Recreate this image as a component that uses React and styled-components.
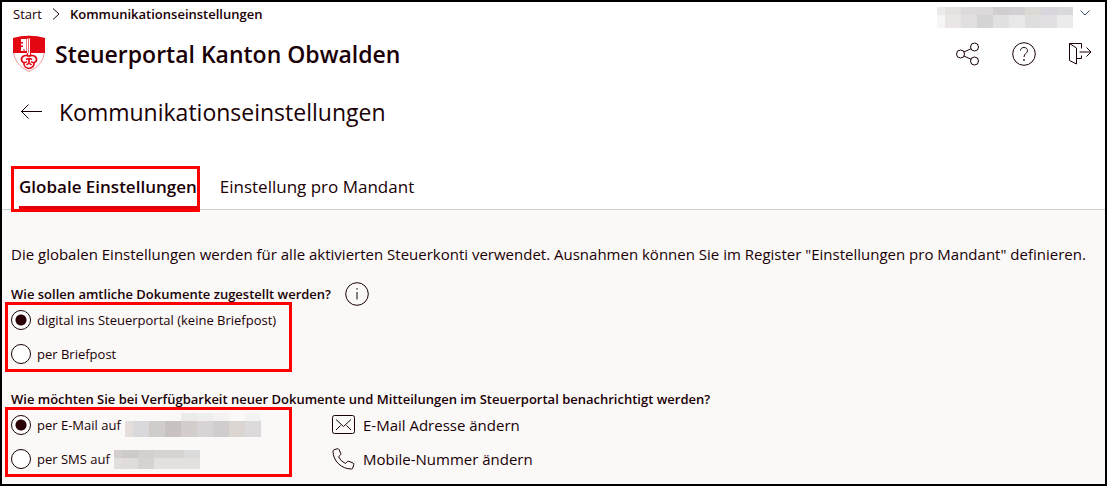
import React from 'react';
import styled, { createGlobalStyle } from 'styled-components';

const accountTiles = [
    [0, 0, 8, 8, '#ebebeb'], [8, 0, 16, 8, '#e3e2e1'], [24, 0, 16, 8, '#dedadc'], [40, 0, 16, 8, '#dcd9da'],
    [56, 0, 16, 8, '#d2cecf'], [72, 0, 16, 8, '#d2d0d2'], [88, 0, 16, 8, '#ddd9d5'], [104, 0, 16, 8, '#dad5dd'],
    [120, 0, 16, 8, '#d9d8da'],
    [0, 8, 8, 13, '#f6f6f6'], [8, 8, 16, 13, '#eae6e5'], [24, 8, 16, 13, '#e2dfe0'], [40, 8, 16, 13, '#d5d4d5'],
    [56, 8, 16, 13, '#e2e1e2'], [72, 8, 16, 13, '#e8e8e8'], [88, 8, 16, 13, '#dfdedf'], [104, 8, 16, 13, '#e2dfe2'],
    [120, 8, 16, 13, '#ebebeb'],
];

const mailTiles = [
    [56, 0, 16, 8, '#ebebea'], [72, 0, 16, 8, '#eeeeed'], [88, 0, 16, 8, '#f4f3f2'], [120, 0, 16, 8, '#f5f4f4'],
    [0, 8, 8, 16, '#e6dedb'], [8, 8, 16, 16, '#d9d8db'], [24, 8, 16, 16, '#d0ccc9'], [40, 8, 16, 16, '#c8c3c1'],
    [56, 8, 16, 16, '#d3cecb'], [72, 8, 16, 16, '#d8d4d5'], [88, 8, 16, 16, '#d1cdcf'], [104, 8, 16, 16, '#dbd6d1'],
    [120, 8, 16, 16, '#dddadc'],
];

const smsTiles = [
    [0, 0, 8, 8, '#d4cecd'], [8, 0, 16, 8, '#cdcac9'], [24, 0, 16, 8, '#d3d0d0'], [40, 0, 30, 8, '#d5d4d3'],
    [70, 0, 16, 8, '#dcdbdb'],
    [0, 8, 8, 11, '#e2dedd'], [8, 8, 16, 11, '#e0dcdc'], [24, 8, 16, 11, '#d8d3d3'], [40, 8, 46, 11, '#e2e1e0'],
];

function Redacted({ tiles, width, height }) {
    return (
        <Tiles width={width} height={height} shapeRendering="crispEdges" aria-hidden="true">
            {tiles.map(([x, y, w, h, fill]) => (
                <rect key={`${x}-${y}`} x={x} y={y} width={w} height={h} fill={fill} />
            ))}
        </Tiles>
    );
}

function Choice({ name, label, tiles, width, height, ...rest }) {
    return (
        <ChoiceLabel>
            <Radio type="radio" name={name} {...rest} />
            <span>{label}</span>
            {tiles && <Redacted tiles={tiles} width={width} height={height} />}
        </ChoiceLabel>
    );
}

function Crest() {
    return (
        <svg width="34" height="38" viewBox="0 0 34 38" role="img" aria-label="Kanton Obwalden">
            <path d="M1.5 3.5Q17-1 32.500 3.500V16Q32 30 17 36.500Q2 30 1.500 16Z" fill="#fff" stroke="#ef9a9e" />
            <path d="M1 3Q17-1.500 33 3V18H1Z" fill="#e30613" />
            <path d="M15 3.500H18V18H15Z" fill="#fff" />
            <path d="M9 4H14.500V16H12.500V14H11.500V16H9V12H11V10.500H9V8.500H11V7H9Z" fill="#fff" />
            <path d="M16.500 3.500V18" stroke="#e30613" strokeWidth="0.600" />
            <g fill="none" stroke="#e30613" strokeWidth="1.700">
                <path d="M15.500 18V21.500M18.500 18V21.500" strokeWidth="1" />
                <path d="M17 21.500C15 19.500 9 20.500 9.500 25C10 28 13 28.500 15 26.500" />
                <path d="M17 21.500C19 19.500 25 20.500 24.500 25C24 28 21 28.500 19 26.500" />
                <path d="M12 28C11.500 31 14 33 17 33.500C20 33 22.500 31 22 28" />
                <path d="M14 24.500Q17 22.500 20 24.500M17 23.500V28.500M14.500 30Q17 27 19.500 30" />
            </g>
        </svg>
    );
}

function ShareIcon() {
    return (
        <Icon width="24" height="24" viewBox="0 0 24 24">
            <circle cx="4.5" cy="12" r="4" />
            <circle cx="18.5" cy="5" r="4" />
            <circle cx="18.5" cy="19" r="4" />
            <path d="M8 10L15 6.7M8 14L15 17.3" />
        </Icon>
    );
}

function HelpIcon() {
    return (
        <Icon width="24" height="24" viewBox="0 0 24 24">
            <circle cx="12" cy="12" r="11.3" />
            <path d="M8.5 8.5C8.5 6.5 10 5.5 12 5.5S15.5 6.7 15.5 8.7C15.5 11.3 12 11.5 12 15" />
            <path d="M12 17.2V18.8" strokeWidth="1.6" />
        </Icon>
    );
}

function ExitIcon() {
    return (
        <Icon width="24" height="24" viewBox="0 0 24 24">
            <path d="M1.5 1.5L8.5 6V22L1.5 18.5ZM1.5 1.5H13.5V6.500M13.5 13.5V16.5H8.5M11.5 10H23M18.5 5.5L23 10L18.500 14.5" />
        </Icon>
    );
}

function InfoIcon() {
    return (
        <Icon width="24" height="24" viewBox="0 0 24 24">
            <circle cx="12" cy="12" r="11.3" />
            <path d="M12 10V17.5M12 6V7.6" />
        </Icon>
    );
}

function MailIcon() {
    return (
        <Icon width="24" height="20" viewBox="0 0 24 20">
            <rect x="0.5" y="0.5" width="22" height="18" rx="2" />
            <path d="M4 4.5L11.5 11.5L19 4.5M4 15L8.5 10.5M19 15L14.5 10.5" />
        </Icon>
    );
}

function PhoneIcon() {
    return (
        <Icon width="24" height="22" viewBox="0 0 24 22">
            <path d="M2 1.8L5.5 0.7Q6.5 0.5 7 1.5L8.8 5.5Q9 6.5 8.3 7.2L6.5 8.8Q9 13.5 13.5 15.5L15.2 13.6Q15.8 13 16.8 13.3L21 15Q22 15.5 21.7 16.5L20.8 20Q20.5 21 19.5 21C9.5 21 1 13 1 3.2Q1 2.2 2 1.8Z" />
        </Icon>
    );
}

export default function App() {
    return (
        <>
            <GlobalStyle />
            <Page>
                <TopBar>
                    <Breadcrumb aria-label="Breadcrumb">
                        <a href="#start">Start</a>
                        <Icon width="8" height="12" viewBox="0 0 8 12">
                            <path d="M1 0.5L7 6L1 11.5" />
                        </Icon>
                        <strong>Kommunikationseinstellungen</strong>
                    </Breadcrumb>
                    <AccountButton type="button" aria-label="Konto">
                        <Redacted tiles={accountTiles} width={136} height={21} />
                        <Chevron width="10" height="6" viewBox="0 0 10 6">
                            <path d="M0.5 0.5L5 5L9.5 0.5" />
                        </Chevron>
                    </AccountButton>
                </TopBar>
                <Header>
                    <Brand>
                        <Crest />
                        <PortalName>Steuerportal Kanton Obwalden</PortalName>
                    </Brand>
                    <HeaderActions>
                        <IconButton type="button" aria-label="Teilen"><ShareIcon /></IconButton>
                        <IconButton type="button" aria-label="Hilfe"><HelpIcon /></IconButton>
                        <IconButton type="button" aria-label="Abmelden"><ExitIcon /></IconButton>
                    </HeaderActions>
                </Header>
                <TitleRow>
                    <IconButton type="button" aria-label="Zurück">
                        <Icon width="22" height="16" viewBox="0 0 22 16">
                            <path d="M22 7.5H1M8.5 0.5L1.500 7.5L8.5 14.5" />
                        </Icon>
                    </IconButton>
                    <PageTitle>Kommunikationseinstellungen</PageTitle>
                </TitleRow>
                <Tabs role="tablist">
                    <TabFrame>
                        <Tab type="button" role="tab" aria-selected="true" $active>Globale Einstellungen</Tab>
                    </TabFrame>
                    <Tab type="button" role="tab" aria-selected="false">Einstellung pro Mandant</Tab>
                </Tabs>
                <Panel role="tabpanel">
                    <Intro>
                        Die globalen Einstellungen werden für alle aktivierten Steuerkonti verwendet. Ausnahmen können Sie im Register "Einstellungen pro Mandant" definieren.
                    </Intro>
                    <Question>
                        <span id="delivery">Wie sollen amtliche Dokumente zugestellt werden?</span>
                        <IconButton type="button" aria-label="Info"><InfoIcon /></IconButton>
                    </Question>
                    <Choices>
                        <ChoiceFrame role="radiogroup" aria-labelledby="delivery">
                            <Choice name="delivery" label="digital ins Steuerportal (keine Briefpost)" defaultChecked />
                            <Choice name="delivery" label="per Briefpost" />
                        </ChoiceFrame>
                    </Choices>
                    <Question>
                        <span id="notify">Wie möchten Sie bei Verfügbarkeit neuer Dokumente und Mitteilungen im Steuerportal benachrichtigt werden?</span>
                    </Question>
                    <Choices>
                        <ChoiceFrame role="radiogroup" aria-labelledby="notify">
                            <Choice name="notify" label="per E-Mail auf" tiles={mailTiles} width={136} height={24} defaultChecked />
                            <Choice name="notify" label="per SMS auf" tiles={smsTiles} width={86} height={19} />
                        </ChoiceFrame>
                        <ChangeActions>
                            <ChangeButton type="button"><MailIcon />E-Mail Adresse ändern</ChangeButton>
                            <ChangeButton type="button"><PhoneIcon />Mobile-Nummer ändern</ChangeButton>
                        </ChangeActions>
                    </Choices>
                </Panel>
            </Page>
        </>
    );
}

// Styles
const GlobalStyle = createGlobalStyle`
    * {
        box-sizing: border-box;
    }

    body {
        margin: 0;
        color: #1a0005;
        background: #fff;
        font-family: "Open Sans", "Noto Sans", sans-serif;
        font-size: 17px;
    }
`;

const Page = styled.div`
    display: flex;
    flex-direction: column;
    min-height: 100vh;
    border: 2px solid #000;
`;

const Button = styled.button`
    padding: 0;
    border: 0;
    background: none;
    color: inherit;
    font: inherit;
    cursor: pointer;
`;

const Icon = styled.svg`
    flex: none;
    fill: none;
    stroke: #1a0005;
    stroke-width: 1;
`;

const Chevron = styled(Icon)`
    margin-top: 3px;
    stroke: #33506e;
`;

const Tiles = styled.svg`
    flex: none;
`;

const TopBar = styled.div`
    display: flex;
    align-items: flex-start;
    justify-content: space-between;
    height: 26px;
    padding: 0 15px 0 11px;
`;

const Breadcrumb = styled.nav`
    display: flex;
    align-items: center;
    gap: 10px;
    height: 24px;
    font-size: 13px;

    a {
        color: inherit;
        text-decoration: none;
    }

    strong {
        font-weight: 600;
    }
`;

const AccountButton = styled(Button)`
    display: flex;
    align-items: flex-start;
    gap: 7px;
    padding-top: 5px;
`;

const Header = styled.header`
    display: flex;
    align-items: center;
    justify-content: space-between;
    height: 52px;
    padding: 0 13px 0 10px;
`;

const Brand = styled.div`
    display: flex;
    align-items: center;
    gap: 9px;
`;

const PortalName = styled.div`
    font-size: 23px;
    font-weight: 600;
`;

const HeaderActions = styled.div`
    display: flex;
    gap: 32px;
`;

const IconButton = styled(Button)`
    display: flex;
    align-items: center;
`;

const TitleRow = styled.div`
    display: flex;
    align-items: center;
    gap: 17px;
    height: 64px;
    padding: 0 18px;
`;

const PageTitle = styled.h1`
    margin: 0;
    font-size: 23px;
    font-weight: 400;
`;

/* the frame of the active tab hangs over the bottom line */
const Tabs = styled.div`
    position: relative;
    display: flex;
    align-items: flex-start;
    gap: 20px;
    height: 44px;
    margin-top: 22px;
    padding-left: 9px;
    border-bottom: 1px solid #d2d0ce;
`;

const TabFrame = styled.div`
    display: flex;
    height: 46px;
    padding-left: 5px;
    border: 3px solid #f00;
`;

const Tab = styled(Button)`
    height: 40px;
    padding-bottom: ${props => (props.$active ? '3px' : '0')};
    border-bottom: ${props => (props.$active ? '3px solid #e3000b' : '0')};
    font-size: 17px;
    font-weight: ${props => (props.$active ? 600 : 400)};
`;

const Panel = styled.main`
    flex: 1;
    padding: 32px 9px 7px;
    background: #faf9f8;
`;

const Intro = styled.p`
    margin: 0 0 16px;
    font-size: 15px;
    line-height: 24px;
`;

const Question = styled.div`
    display: flex;
    align-items: center;
    gap: 14px;
    height: 24px;
    font-size: 13px;
    font-weight: 600;
`;

const Choices = styled.div`
    display: flex;
    gap: 40px;
    margin: -4px 0 15px -6px;

    &:last-child {
        margin-bottom: 0;
    }
`;

const ChoiceFrame = styled.div`
    display: flex;
    flex-direction: column;
    gap: 4px;
    width: 287px;
    border: 3px solid #f00;
`;

const ChoiceLabel = styled.label`
    display: flex;
    align-items: center;
    gap: 6px;
    height: 30px;
    padding-left: 3px;
    font-size: 13px;

    ${Tiles} {
        margin-left: -2px;
    }
`;

const Radio = styled.input`
    appearance: none;
    flex: none;
    width: 20px;
    height: 20px;
    margin: 0;
    border: 1px solid #1a0005;
    border-radius: 50%;
    background: #fff;

    &:checked {
        background: radial-gradient(circle, #2a0006 5px, #fff 6px);
    }
`;

const ChangeActions = styled.div`
    display: flex;
    flex-direction: column;
    gap: 4px;
    padding-top: 3px;
`;

const ChangeButton = styled(Button)`
    display: flex;
    align-items: center;
    gap: 7px;
    height: 30px;
    font-size: 15px;
`;
